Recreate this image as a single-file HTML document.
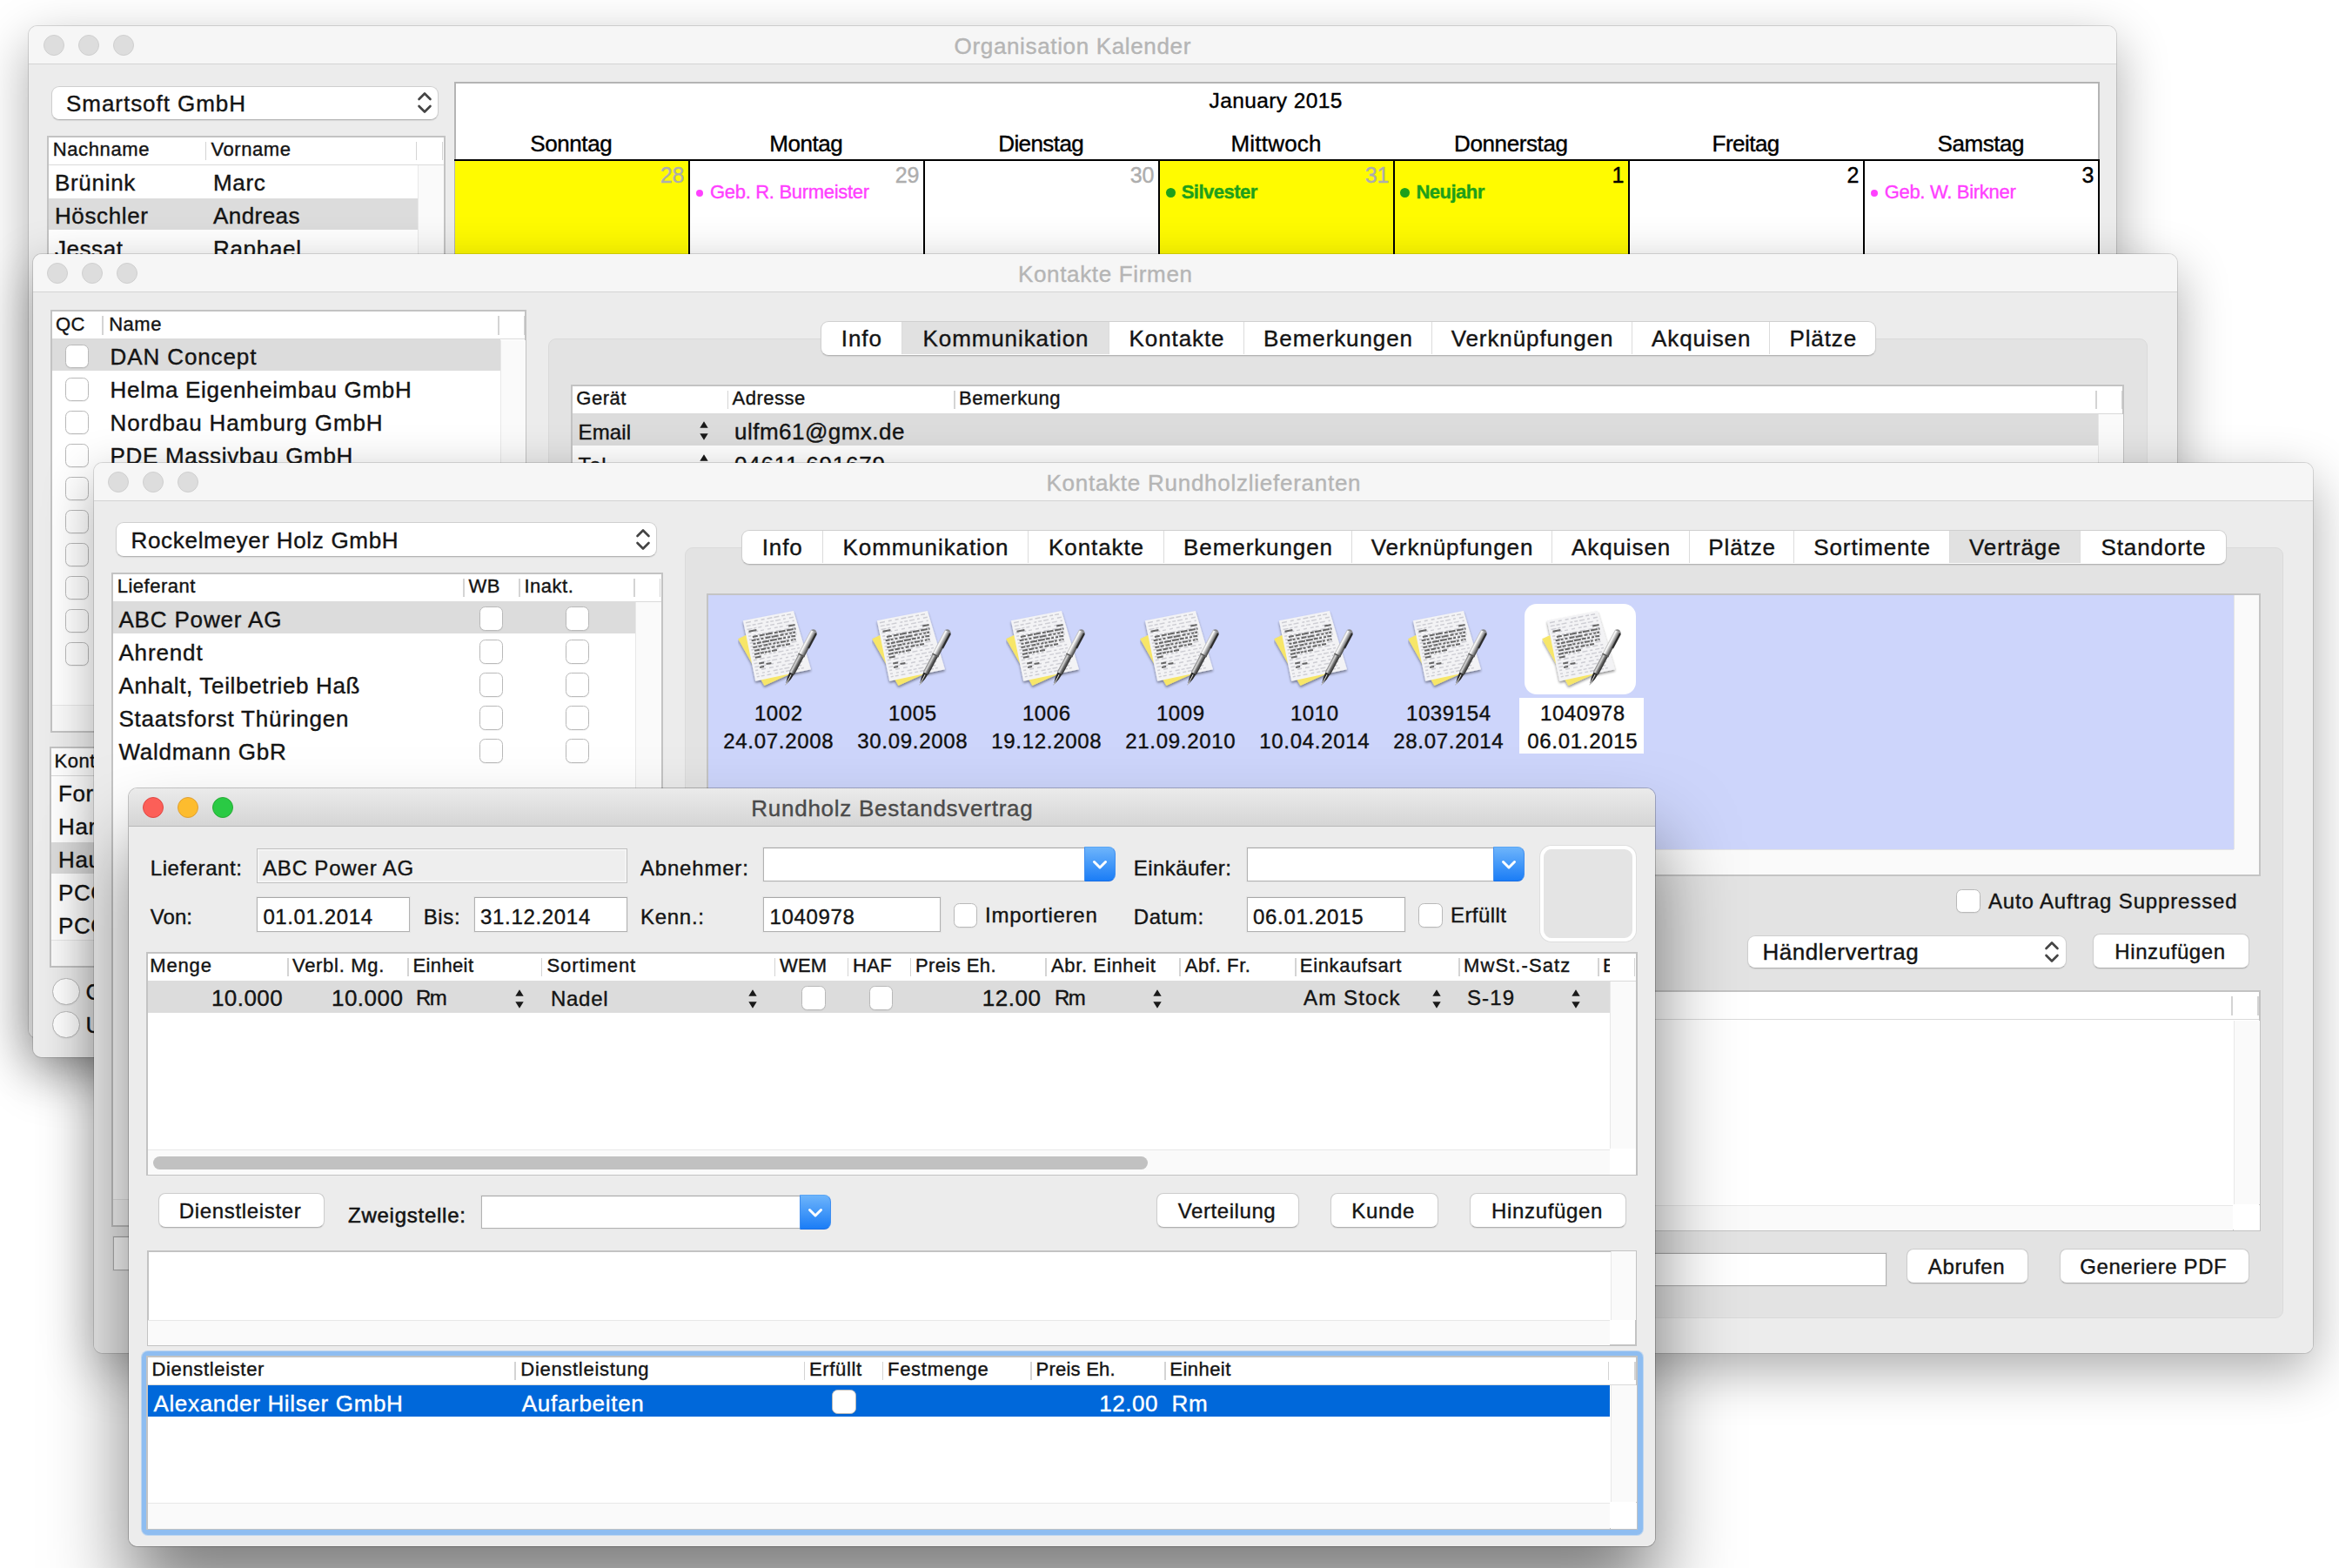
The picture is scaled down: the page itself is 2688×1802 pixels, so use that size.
<!DOCTYPE html>
<html><head><meta charset="utf-8"><title>Screenshot</title>
<style>
html,body{margin:0;padding:0}
body{width:2688px;height:1802px;overflow:hidden;background:#fff;font-family:"Liberation Sans",sans-serif;font-size:26px;letter-spacing:0.6px;color:#141414;position:relative}
.a{position:absolute;box-sizing:border-box}
.t{white-space:nowrap;-webkit-text-stroke:0.38px currentColor}
.win{position:absolute;border-radius:10px;box-shadow:0 0 0 1px rgba(0,0,0,0.13),0 20px 60px rgba(0,0,0,0.33)}
.win.act{box-shadow:0 0 0 1px rgba(0,0,0,0.22),0 60px 90px rgba(0,0,0,0.5)}
.wc{position:absolute;left:0;top:0;right:0;bottom:0;border-radius:10px;overflow:hidden;background:#ececec}
.tb{position:absolute;left:0;top:0;right:0;height:44px;box-sizing:border-box;background:#f6f6f6;border-bottom:1px solid #d4d4d4}
.act .tb{background:linear-gradient(#ebebeb,#d5d5d5);border-bottom:1px solid #b8b8b8}
.pop{background:#fff;border-radius:9px;border:1px solid #cfcfcf;border-bottom-color:#b4b4b4;box-shadow:0 1px 1px rgba(0,0,0,0.08)}
.btn{background:#fff;border-radius:8px;border:1px solid #cdcdcd;border-bottom-color:#b0b0b0;box-shadow:0 1px 1px rgba(0,0,0,0.08)}
.cb{background:#fff;border-radius:6.5px;border:1px solid #b9b9b9;box-shadow:0 1px 1px rgba(0,0,0,0.05)}
.rb{background:#fff;border-radius:50%;border:1px solid #b9b9b9;box-shadow:0 1px 1px rgba(0,0,0,0.05)}
.fld{background:#fff;border:1px solid #b2b2b2;border-top-color:#a8a8a8;box-shadow:0 0 0 1px rgba(0,0,0,0.03)}
.fld.dis{background:#eeeeee;border:1px solid #c0c0c0;box-shadow:inset 0 0 0 1.5px #f7f7f7}
.cbb{border-radius:0 8px 8px 0;background:linear-gradient(#6db4fb,#1b7df6);border:1px solid #3f8ef0;border-top-color:#5aa6f5;border-bottom-color:#1a6fe6}
.tbl{background:#fff;border:2px solid #c3c3c3}
.th{background:#fff;border-bottom:1px solid #dadada}
.vs{background:#fafafa;border-left:1px solid #e8e8e8}
.hs{background:#fafafa;border-top:1px solid #e8e8e8}
.seg{background:#fff;border-radius:9px;border:1px solid #cfcfcf;border-bottom-color:#b4b4b4;box-shadow:0 1px 1px rgba(0,0,0,0.08)}
.tabbox{background:#e3e3e3;border-radius:9px;border:1px solid #dadada}
.sel{background:#dcdcdc}
</style></head><body>
<svg width="0" height="0" style="position:absolute"><defs>
<linearGradient id="pen" x1="0" y1="0" x2="1" y2="0"><stop offset="0" stop-color="#b8b8b8"/><stop offset="0.22" stop-color="#ffffff"/><stop offset="0.55" stop-color="#a8a8a8"/><stop offset="1" stop-color="#3a3a3a"/></linearGradient>
<linearGradient id="pen2" x1="0" y1="0" x2="1" y2="0"><stop offset="0" stop-color="#7a7a7a"/><stop offset="0.28" stop-color="#d8d8d8"/><stop offset="0.6" stop-color="#6a6a6a"/><stop offset="1" stop-color="#2a2a2a"/></linearGradient>
<filter id="ds" x="-20%" y="-20%" width="140%" height="150%"><feGaussianBlur in="SourceAlpha" stdDeviation="1.6"/><feOffset dy="2"/><feComponentTransfer><feFuncA type="linear" slope="0.45"/></feComponentTransfer><feMerge><feMergeNode/><feMergeNode in="SourceGraphic"/></feMerge></filter>
<symbol id="doc" viewBox="0 0 92 92">
<g filter="url(#ds)">
<path d="M0.2 33.3 L43 13 L77 66 L30.4 87 Z" fill="#f7e668"/>
<path d="M5.9 12.2 L63.9 1.1 L84 68.3 L20.2 81.7 Z" fill="#f3f3f5"/>
</g>
<path d="M9.0 14.7L14.9 13.5M18.8 12.8L22.7 12.0M26.6 11.3L30.6 10.5M33.5 10.0L39.4 8.8M41.4 8.5L47.3 7.3M50.2 6.8L54.1 6.0M56.1 5.6L61.0 4.7M9.8 18.6L14.7 17.6M16.6 17.3L20.6 16.5M22.5 16.1L28.4 15.0M32.4 14.3L35.3 13.7M37.3 13.3L41.2 12.6M43.2 12.2L49.0 11.1M52.0 10.5L54.9 9.9M58.9 9.2L63.8 8.2M10.6 22.5L16.5 21.4M18.4 21.0L21.4 20.4M23.3 20.1L27.3 19.3M31.2 18.6L35.1 17.8M37.1 17.4L42.0 16.5M44.9 15.9L50.8 14.8M52.8 14.4L58.7 13.3M62.6 12.5L64.6 12.2M11.4 26.4L15.3 25.7M19.2 24.9L23.2 24.2M26.1 23.6L30.0 22.9M34.0 22.1L37.9 21.3M41.8 20.6L45.7 19.8M47.7 19.5L51.6 18.7M55.6 18.0L61.5 16.8M12.2 30.3L15.1 29.8M18.1 29.2L21.0 28.6M23.0 28.3L25.9 27.7M27.9 27.3L32.8 26.4M34.8 26.0L40.7 24.9M43.6 24.3L49.5 23.2M53.4 22.4L59.3 21.3M62.3 20.8L66.2 20.0M13.0 34.3L15.9 33.7M17.9 33.3L21.8 32.6M24.8 32.0L27.7 31.4M30.7 30.9L34.6 30.1M36.6 29.7L39.5 29.2M41.5 28.8L46.4 27.9M49.3 27.3L55.2 26.2M57.2 25.8L60.1 25.2M62.1 24.9L66.0 24.1M13.8 38.2L18.7 37.2M22.6 36.5L26.6 35.7M28.5 35.4L33.4 34.4M35.4 34.0L41.3 32.9M44.2 32.3L48.2 31.6M52.1 30.8L55.0 30.3M57.0 29.9L62.9 28.8M65.8 28.2L67.8 27.8M14.6 42.1L17.5 41.5M21.5 40.8L24.4 40.2M27.4 39.7L30.3 39.1M34.2 38.3L39.2 37.4M42.1 36.8L46.0 36.1M48.0 35.7L50.9 35.1M53.9 34.6L58.8 33.6M62.7 32.9L65.7 32.3M15.4 46.0L19.3 45.3M22.3 44.7L27.2 43.8M29.2 43.4L35.0 42.3M37.0 41.9L42.9 40.7M44.9 40.4L50.8 39.2M54.7 38.5L57.6 37.9M61.6 37.2L67.5 36.0M16.2 49.9L19.2 49.4M23.1 48.6L26.0 48.1M28.0 47.7L30.9 47.1M34.9 46.4L37.8 45.8M40.8 45.2L46.7 44.1M50.6 43.4L55.5 42.4M58.4 41.8L64.3 40.7M67.3 40.2L70.2 39.6M17.0 53.8L20.0 53.3M23.9 52.5L26.8 52.0M29.8 51.4L32.7 50.8M35.7 50.3L38.6 49.7M40.6 49.3L43.5 48.8M46.5 48.2L52.4 47.1M55.3 46.5L58.3 46.0M61.2 45.4L66.1 44.4M68.1 44.1L71.0 43.5M17.8 57.8L21.8 57.0M24.7 56.5L30.6 55.3M33.5 54.8L37.5 54.0M40.4 53.4L46.3 52.3M50.2 51.6L55.1 50.6M57.1 50.2L63.0 49.1M65.0 48.7L68.9 48.0M18.6 61.7L22.6 60.9M26.5 60.2L31.4 59.2M33.4 58.9L37.3 58.1M39.3 57.7L45.1 56.6M48.1 56.0L51.0 55.5M55.0 54.7L57.9 54.2M60.9 53.6L64.8 52.8M66.7 52.5L72.6 51.3M19.4 65.6L24.3 64.7M26.3 64.3L32.2 63.2M35.1 62.6L41.0 61.5M45.0 60.7L49.9 59.8M53.8 59.0L59.7 57.9M62.6 57.3L65.6 56.8M67.6 56.4L72.5 55.5M20.2 69.5L23.2 69.0M27.1 68.2L32.0 67.3M36.0 66.5L40.9 65.6M43.8 65.0L46.8 64.4M50.7 63.7L54.6 62.9M57.6 62.4L63.5 61.2M65.4 60.9L68.4 60.3M71.3 59.7L74.3 59.2M21.0 73.4L24.0 72.9M27.9 72.1L30.9 71.6M33.8 71.0L36.8 70.4M40.7 69.7L45.6 68.7M47.6 68.4L51.5 67.6M53.5 67.2L59.3 66.1M62.3 65.5L66.2 64.8M70.1 64.0L73.1 63.5M21.8 76.9L24.7 76.3M26.7 75.9L30.6 75.2M33.5 74.6L38.4 73.7M42.4 72.9L46.3 72.2M49.3 71.6L53.2 70.9M55.1 70.5L61.0 69.3M65.0 68.6L70.9 67.5M72.8 67.1L75.8 66.5" stroke="#cdcdd3" stroke-width="1.4" fill="none"/>
<path d="M12.5 24.7L21.4 23.0M58.2 18.5L65.6 17.1M16.9 31.0L22.8 29.8M24.8 29.5L30.7 28.3M32.0 28.1L39.9 26.6M41.8 26.2L45.8 25.4M46.8 25.2L54.6 23.7M56.0 23.5L63.8 22.0M64.8 21.8L66.5 21.5M15.7 35.3L20.7 34.3M21.6 34.1L24.6 33.6M26.5 33.2L29.5 32.6M31.5 32.2L37.4 31.1M38.7 30.9L46.6 29.4M48.5 29.0L52.5 28.2M54.4 27.9L57.4 27.3M59.3 26.9L62.3 26.3M63.3 26.2L66.2 25.6M67.2 25.4L67.3 25.4M17.5 39.0L20.5 38.4M21.9 38.2L26.8 37.2M28.1 37.0L36.0 35.5M37.0 35.3L44.8 33.8M45.8 33.6L50.7 32.6M52.1 32.4L55.0 31.8M57.0 31.4L60.0 30.9M61.3 30.6L66.2 29.7M67.6 29.4L67.6 29.4M17.4 43.1L22.3 42.2M23.6 41.9L27.6 41.1M29.5 40.8L34.4 39.8M35.4 39.6L38.4 39.1M40.3 38.7L43.3 38.1M44.7 37.9L47.6 37.3M49.0 37.0L54.9 35.9M55.9 35.7L58.8 35.2M60.8 34.8L63.7 34.2M64.7 34.0L66.5 33.7M19.1 46.8L25.0 45.7M26.4 45.4L32.3 44.3M33.7 44.0L36.6 43.5M38.6 43.1L42.5 42.3M44.5 42.0L49.4 41.0M50.8 40.8L53.7 40.2M55.1 39.9L60.0 39.0M19.0 50.9L24.9 49.8M25.8 49.6L29.8 48.9M30.8 48.7L33.7 48.1M34.7 47.9L37.6 47.4M39.0 47.1L44.9 46.0M19.8 54.8L26.7 53.5M24.2 61.6L30.1 60.5M25.1 66.0L30.1 65.1M32.5 62.1L38.4 61.0" stroke="#444" stroke-width="2" fill="none" opacity="0.8"/>
<g transform="translate(54.6 86.6) rotate(27.9)">
<path d="M0 0 L-2.2 -9 L-2.8 -16 L2.8 -16 L2.2 -9 Z" fill="#262626"/>
<path d="M0 -1 L0 -14" stroke="#e8e8e8" stroke-width="0.9"/>
<rect x="-3.4" y="-39" width="6.8" height="23.5" fill="url(#pen2)"/>
<rect x="-3.9" y="-70" width="7.8" height="31.5" fill="url(#pen)"/>
<path d="M-3.9 -70 Q0 -74.5 3.9 -70 Z" fill="#8a8a8a"/>
<rect x="2.4" y="-69" width="2.2" height="19" fill="#262626" opacity="0.9"/>
<rect x="-3.9" y="-40" width="7.8" height="1.6" fill="#555"/>
</g>
</symbol>
</defs></svg>

<div class="win" style="left:33px;top:30px;width:2399px;height:1163px;"><div class="wc">
<div class="tb"></div>
<div class="a t" style="top:8.3px;font-size:26px;line-height:31px;left:699.8px;width:1000px;text-align:center;color:#b5b5b5;letter-spacing:0.65px;">Organisation Kalender</div>
<div class="a " style="left:17.0px;top:10.0px;width:24.0px;height:24.0px;border-radius:50%;background:#dddddd;border:1px solid #cfcfcf;"></div>
<div class="a " style="left:57.0px;top:10.0px;width:24.0px;height:24.0px;border-radius:50%;background:#dddddd;border:1px solid #cfcfcf;"></div>
<div class="a " style="left:97.0px;top:10.0px;width:24.0px;height:24.0px;border-radius:50%;background:#dddddd;border:1px solid #cfcfcf;"></div>
<div class="a pop" style="left:26.3px;top:68.5px;width:445.0px;height:39.3px;"></div>
<div class="a t" style="top:74.1px;font-size:26px;line-height:31px;left:43.0px;letter-spacing:0.96px;">Smartsoft GmbH</div>
<svg class="a" style="left:444.8px;top:72.2px" width="20" height="32" viewBox="0 0 20 32"><path d="M3.5 12 L10 5.5 L16.5 12 M3.5 20 L10 26.5 L16.5 20" fill="none" stroke="#444" stroke-width="2.6" stroke-linecap="round" stroke-linejoin="round"/></svg>
<div class="a tbl" style="left:21.3px;top:125.8px;width:457.4px;height:944.9px;"></div>
<div class="a th" style="left:23.3px;top:127.8px;width:453.4px;height:31.9px;"></div>
<div class="a " style="left:202.8px;top:132.5px;width:1.5px;height:21.7px;background:#d4d4d4;"></div>
<div class="a " style="left:444.9px;top:132.5px;width:1.5px;height:21.7px;background:#d4d4d4;"></div>
<div class="a " style="left:474.9px;top:132.5px;width:1.5px;height:21.7px;background:#d4d4d4;"></div>
<div class="a t" style="top:129.1px;font-size:22px;line-height:26px;left:27.8px;letter-spacing:0.6px;">Nachname</div>
<div class="a t" style="top:129.1px;font-size:22px;line-height:26px;left:209.4px;letter-spacing:0.59px;">Vorname</div>
<div class="a vs" style="left:447.0px;top:160.2px;width:30.0px;height:908.8px;"></div>
<div class="a t" style="top:165.4px;font-size:26px;line-height:31px;left:29.9px;letter-spacing:0.71px;">Brünink</div>
<div class="a t" style="top:165.4px;font-size:26px;line-height:31px;left:212.0px;letter-spacing:0.68px;">Marc</div>
<div class="a sel" style="left:23.0px;top:198.0px;width:424.0px;height:36.3px;"></div>
<div class="a t" style="top:203.4px;font-size:26px;line-height:31px;left:29.9px;letter-spacing:0.63px;">Höschler</div>
<div class="a t" style="top:203.4px;font-size:26px;line-height:31px;left:212.0px;letter-spacing:0.44px;">Andreas</div>
<div class="a t" style="top:241.4px;font-size:26px;line-height:31px;left:29.9px;letter-spacing:0.57px;">Jessat</div>
<div class="a t" style="top:241.4px;font-size:26px;line-height:31px;left:212.0px;letter-spacing:0.69px;">Raphael</div>
<div class="a t" style="top:279.4px;font-size:26px;line-height:31px;left:29.9px;letter-spacing:0.6px;">Kluge</div>
<div class="a t" style="top:279.4px;font-size:26px;line-height:31px;left:212.0px;letter-spacing:0.6px;">Stefan</div>
<div class="a " style="left:489.0px;top:64.0px;width:1890.5px;height:1006.0px;background:#fff;border:2px solid #b4b4b4;border-bottom:none;"></div>
<div class="a t" style="top:71.0px;font-size:24.5px;line-height:29px;left:933.2px;width:1000px;text-align:center;color:#000;letter-spacing:0.41px;">January 2015</div>
<div class="a t" style="top:119.7px;font-size:26px;line-height:31px;left:123.3px;width:1000px;text-align:center;color:#000;letter-spacing:-0.43px;">Sonntag</div>
<div class="a t" style="top:119.7px;font-size:26px;line-height:31px;left:393.3px;width:1000px;text-align:center;color:#000;letter-spacing:-0.42px;">Montag</div>
<div class="a t" style="top:119.7px;font-size:26px;line-height:31px;left:663.2px;width:1000px;text-align:center;color:#000;letter-spacing:-0.59px;">Dienstag</div>
<div class="a t" style="top:119.7px;font-size:26px;line-height:31px;left:933.6px;width:1000px;text-align:center;color:#000;letter-spacing:0.23px;">Mittwoch</div>
<div class="a t" style="top:119.7px;font-size:26px;line-height:31px;left:1203.3px;width:1000px;text-align:center;color:#000;letter-spacing:-0.4px;">Donnerstag</div>
<div class="a t" style="top:119.7px;font-size:26px;line-height:31px;left:1473.2px;width:1000px;text-align:center;color:#000;letter-spacing:-0.54px;">Freitag</div>
<div class="a t" style="top:119.7px;font-size:26px;line-height:31px;left:1743.3px;width:1000px;text-align:center;color:#000;letter-spacing:-0.45px;">Samstag</div>
<div class="a " style="left:490.0px;top:155.0px;width:268.0px;height:415.0px;background:#fffb00;"></div>
<div class="a " style="left:1300.0px;top:155.0px;width:268.0px;height:415.0px;background:#fffb00;"></div>
<div class="a " style="left:1570.0px;top:155.0px;width:268.0px;height:415.0px;background:#fffb00;"></div>
<div class="a " style="left:489.0px;top:153.2px;width:1890.5px;height:2.0px;background:#000;"></div>
<div class="a " style="left:758.0px;top:154.0px;width:2.0px;height:416.0px;background:#000;"></div>
<div class="a " style="left:1028.0px;top:154.0px;width:2.0px;height:416.0px;background:#000;"></div>
<div class="a " style="left:1298.0px;top:154.0px;width:2.0px;height:416.0px;background:#000;"></div>
<div class="a " style="left:1568.0px;top:154.0px;width:2.0px;height:416.0px;background:#000;"></div>
<div class="a " style="left:1838.0px;top:154.0px;width:2.0px;height:416.0px;background:#000;"></div>
<div class="a " style="left:2108.0px;top:154.0px;width:2.0px;height:416.0px;background:#000;"></div>
<div class="a " style="left:2378.0px;top:154.0px;width:1.5px;height:416.0px;background:#000;"></div>
<div class="a t" style="top:155.8px;font-size:25px;line-height:30px;right:1645.5px;color:#adadad;letter-spacing:0px;">28</div>
<div class="a t" style="top:155.8px;font-size:25px;line-height:30px;right:1375.5px;color:#adadad;letter-spacing:0px;">29</div>
<div class="a t" style="top:155.8px;font-size:25px;line-height:30px;right:1105.5px;color:#adadad;letter-spacing:0px;">30</div>
<div class="a t" style="top:155.8px;font-size:25px;line-height:30px;right:835.5px;color:#adadad;letter-spacing:0px;">31</div>
<div class="a t" style="top:155.8px;font-size:25px;line-height:30px;right:565.5px;color:#000;letter-spacing:0px;">1</div>
<div class="a t" style="top:155.8px;font-size:25px;line-height:30px;right:295.5px;color:#000;letter-spacing:0px;">2</div>
<div class="a t" style="top:155.8px;font-size:25px;line-height:30px;right:25.5px;color:#000;letter-spacing:0px;">3</div>
<div class="a " style="left:766.8px;top:187.7px;width:8.0px;height:8.0px;border-radius:50%;background:#ff40ff;"></div>
<div class="a t" style="top:178.4px;font-size:22px;line-height:26px;left:783.0px;color:#ff40ff;letter-spacing:-0.31px;">Geb. R. Burmeister</div>
<div class="a " style="left:1306.5px;top:186.2px;width:11.0px;height:11.0px;border-radius:50%;background:#1ea01a;"></div>
<div class="a t" style="top:178.4px;font-size:22px;line-height:26px;left:1324.7px;color:#1ea01a;font-weight:bold;letter-spacing:-0.5px;">Silvester</div>
<div class="a " style="left:1576.3px;top:186.2px;width:11.0px;height:11.0px;border-radius:50%;background:#1ea01a;"></div>
<div class="a t" style="top:178.4px;font-size:22px;line-height:26px;left:1594.5px;color:#1ea01a;font-weight:bold;letter-spacing:-0.52px;">Neujahr</div>
<div class="a " style="left:2116.5px;top:187.7px;width:8.0px;height:8.0px;border-radius:50%;background:#ff40ff;"></div>
<div class="a t" style="top:178.4px;font-size:22px;line-height:26px;left:2132.7px;color:#ff40ff;letter-spacing:-0.3px;">Geb. W. Birkner</div>
</div></div>
<div class="win" style="left:38px;top:292px;width:2464px;height:923px;"><div class="wc">
<div class="tb"></div>
<div class="a t" style="top:8.3px;font-size:26px;line-height:31px;left:732.3px;width:1000px;text-align:center;color:#b5b5b5;letter-spacing:0.66px;">Kontakte Firmen</div>
<div class="a " style="left:16.0px;top:10.0px;width:24.0px;height:24.0px;border-radius:50%;background:#dddddd;border:1px solid #cfcfcf;"></div>
<div class="a " style="left:56.0px;top:10.0px;width:24.0px;height:24.0px;border-radius:50%;background:#dddddd;border:1px solid #cfcfcf;"></div>
<div class="a " style="left:96.0px;top:10.0px;width:24.0px;height:24.0px;border-radius:50%;background:#dddddd;border:1px solid #cfcfcf;"></div>
<div class="a tbl" style="left:19.8px;top:64.3px;width:547.5px;height:485.4px;"></div>
<div class="a th" style="left:21.8px;top:66.3px;width:543.5px;height:31.9px;"></div>
<div class="a " style="left:79.0px;top:71.0px;width:1.5px;height:21.7px;background:#d4d4d4;"></div>
<div class="a " style="left:534.2px;top:71.0px;width:1.5px;height:21.7px;background:#d4d4d4;"></div>
<div class="a " style="left:563.5px;top:71.0px;width:1.5px;height:21.7px;background:#d4d4d4;"></div>
<div class="a t" style="top:67.6px;font-size:22px;line-height:26px;left:26.0px;letter-spacing:0.5px;">QC</div>
<div class="a t" style="top:67.6px;font-size:22px;line-height:26px;left:87.2px;letter-spacing:0.5px;">Name</div>
<div class="a vs" style="left:537.0px;top:98.7px;width:28.6px;height:419.3px;"></div>
<div class="a hs" style="left:21.5px;top:518.0px;width:515.5px;height:30.0px;"></div>
<div class="a " style="left:537.0px;top:518.0px;width:28.6px;height:30.0px;background:#fff;"></div>
<div class="a sel" style="left:21.5px;top:98.0px;width:515.5px;height:36.0px;"></div>
<div class="a cb " style="left:37.2px;top:103.5px;width:27.2px;height:27.1px;"></div>
<div class="a t" style="top:103.4px;font-size:26px;line-height:31px;left:88.6px;letter-spacing:0.88px;">DAN Concept</div>
<div class="a cb " style="left:37.2px;top:141.5px;width:27.2px;height:27.1px;"></div>
<div class="a t" style="top:141.4px;font-size:26px;line-height:31px;left:88.6px;letter-spacing:0.69px;">Helma Eigenheimbau GmbH</div>
<div class="a cb " style="left:37.2px;top:179.5px;width:27.2px;height:27.1px;"></div>
<div class="a t" style="top:179.4px;font-size:26px;line-height:31px;left:88.6px;letter-spacing:0.88px;">Nordbau Hamburg GmbH</div>
<div class="a cb " style="left:37.2px;top:217.5px;width:27.2px;height:27.1px;"></div>
<div class="a t" style="top:217.4px;font-size:26px;line-height:31px;left:88.6px;letter-spacing:0.67px;">PDE Massivbau GmbH</div>
<div class="a cb " style="left:37.2px;top:255.5px;width:27.2px;height:27.1px;"></div>
<div class="a t" style="top:255.4px;font-size:26px;line-height:31px;left:88.6px;letter-spacing:0.6px;">Ranft Bau GmbH</div>
<div class="a cb " style="left:37.2px;top:293.5px;width:27.2px;height:27.1px;"></div>
<div class="a t" style="top:293.4px;font-size:26px;line-height:31px;left:88.6px;letter-spacing:0.6px;">Richter Hausbau</div>
<div class="a cb " style="left:37.2px;top:331.5px;width:27.2px;height:27.1px;"></div>
<div class="a t" style="top:331.4px;font-size:26px;line-height:31px;left:88.6px;letter-spacing:0.6px;">Schmidt &amp; Söhne</div>
<div class="a cb " style="left:37.2px;top:369.5px;width:27.2px;height:27.1px;"></div>
<div class="a t" style="top:369.4px;font-size:26px;line-height:31px;left:88.6px;letter-spacing:0.6px;">Town &amp; Country</div>
<div class="a cb " style="left:37.2px;top:407.5px;width:27.2px;height:27.1px;"></div>
<div class="a t" style="top:407.4px;font-size:26px;line-height:31px;left:88.6px;letter-spacing:0.6px;">Viebrock Haus</div>
<div class="a cb " style="left:37.2px;top:445.5px;width:27.2px;height:27.1px;"></div>
<div class="a t" style="top:445.4px;font-size:26px;line-height:31px;left:88.6px;letter-spacing:0.6px;">Weber Massivhaus</div>
<div class="a tbl" style="left:19.3px;top:566.3px;width:548.0px;height:253.4px;"></div>
<div class="a th" style="left:21.3px;top:568.3px;width:544.0px;height:31.9px;"></div>
<div class="a " style="left:534.2px;top:573.0px;width:1.5px;height:21.7px;background:#d4d4d4;"></div>
<div class="a " style="left:563.5px;top:573.0px;width:1.5px;height:21.7px;background:#d4d4d4;"></div>
<div class="a t" style="top:569.6px;font-size:22px;line-height:26px;left:24.5px;letter-spacing:0.5px;">Kontakt</div>
<div class="a vs" style="left:537.0px;top:600.7px;width:28.6px;height:187.3px;"></div>
<div class="a hs" style="left:21.0px;top:788.0px;width:516.0px;height:30.0px;"></div>
<div class="a " style="left:537.0px;top:788.0px;width:28.6px;height:30.0px;background:#fff;"></div>
<div class="a t" style="top:605.4px;font-size:26px;line-height:31px;left:29.0px;letter-spacing:0.6px;">Forstmann</div>
<div class="a t" style="top:643.4px;font-size:26px;line-height:31px;left:29.0px;letter-spacing:0.6px;">Hartmann</div>
<div class="a sel" style="left:21.0px;top:676.0px;width:516.0px;height:36.0px;"></div>
<div class="a t" style="top:681.4px;font-size:26px;line-height:31px;left:29.0px;letter-spacing:0.6px;">Hauser</div>
<div class="a t" style="top:719.4px;font-size:26px;line-height:31px;left:29.0px;letter-spacing:0.6px;">PCO AG</div>
<div class="a t" style="top:757.4px;font-size:26px;line-height:31px;left:29.0px;letter-spacing:0.6px;">PCO GmbH</div>
<div class="a rb" style="left:22.2px;top:831.8px;width:31.6px;height:31.6px;"></div>
<div class="a rb" style="left:22.2px;top:869.9px;width:31.6px;height:31.6px;"></div>
<div class="a t" style="top:832.5px;font-size:26px;line-height:31px;left:60.6px;letter-spacing:0.6px;">Computer</div>
<div class="a t" style="top:870.5px;font-size:26px;line-height:31px;left:60.6px;letter-spacing:0.6px;">Unternehmen</div>
<div class="a tabbox" style="left:592.0px;top:96.6px;width:1837.5px;height:801.4px;"></div>
<div class="a seg" style="left:905.0px;top:77.2px;width:1213.0px;height:39.8px;"></div>
<div class="a t" style="top:82.1px;font-size:26px;line-height:31px;left:452.3px;width:1000px;text-align:center;letter-spacing:0.9px;">Info</div>
<div class="a " style="left:999.2px;top:78.2px;width:237.3px;height:37.3px;background:#e1e1e1;"></div>
<div class="a t" style="top:82.1px;font-size:26px;line-height:31px;left:618.0px;width:1000px;text-align:center;letter-spacing:0.9px;">Kommunikation</div>
<div class="a t" style="top:82.1px;font-size:26px;line-height:31px;left:814.5px;width:1000px;text-align:center;letter-spacing:0.9px;">Kontakte</div>
<div class="a t" style="top:82.1px;font-size:26px;line-height:31px;left:1000.0px;width:1000px;text-align:center;letter-spacing:0.9px;">Bemerkungen</div>
<div class="a t" style="top:82.1px;font-size:26px;line-height:31px;left:1223.0px;width:1000px;text-align:center;letter-spacing:0.9px;">Verknüpfungen</div>
<div class="a t" style="top:82.1px;font-size:26px;line-height:31px;left:1417.2px;width:1000px;text-align:center;letter-spacing:0.9px;">Akquisen</div>
<div class="a t" style="top:82.1px;font-size:26px;line-height:31px;left:1557.3px;width:1000px;text-align:center;letter-spacing:0.9px;">Plätze</div>
<div class="a " style="left:998.2px;top:78.2px;width:1.0px;height:37.3px;background:#dcdcdc;"></div>
<div class="a " style="left:1236.0px;top:78.2px;width:1.0px;height:37.3px;background:#dcdcdc;"></div>
<div class="a " style="left:1391.1px;top:78.2px;width:1.0px;height:37.3px;background:#dcdcdc;"></div>
<div class="a " style="left:1606.9px;top:78.2px;width:1.0px;height:37.3px;background:#dcdcdc;"></div>
<div class="a " style="left:1837.3px;top:78.2px;width:1.0px;height:37.3px;background:#dcdcdc;"></div>
<div class="a " style="left:1995.3px;top:78.2px;width:1.0px;height:37.3px;background:#dcdcdc;"></div>
<div class="a tbl" style="left:618.3px;top:149.8px;width:1785.1px;height:658.9px;"></div>
<div class="a th" style="left:620.3px;top:151.8px;width:1781.1px;height:31.9px;"></div>
<div class="a " style="left:797.8px;top:156.5px;width:1.5px;height:21.7px;background:#d4d4d4;"></div>
<div class="a " style="left:1058.2px;top:156.5px;width:1.5px;height:21.7px;background:#d4d4d4;"></div>
<div class="a " style="left:2370.2px;top:156.5px;width:1.5px;height:21.7px;background:#d4d4d4;"></div>
<div class="a " style="left:2399.8px;top:156.5px;width:1.5px;height:21.7px;background:#d4d4d4;"></div>
<div class="a t" style="top:153.1px;font-size:22px;line-height:26px;left:624.3px;letter-spacing:0.5px;">Gerät</div>
<div class="a t" style="top:153.1px;font-size:22px;line-height:26px;left:803.5px;letter-spacing:0.5px;">Adresse</div>
<div class="a t" style="top:153.1px;font-size:22px;line-height:26px;left:1064.0px;letter-spacing:0.5px;">Bemerkung</div>
<div class="a vs" style="left:2373.0px;top:184.2px;width:28.7px;height:622.8px;"></div>
<div class="a sel" style="left:620.0px;top:183.7px;width:1753.0px;height:36.3px;"></div>
<div class="a t" style="top:189.5px;font-size:24px;line-height:29px;left:626.6px;letter-spacing:0.1px;">Email</div>
<svg class="a" style="left:765.8px;top:192.0px" width="10" height="22" viewBox="0 0 10 22"><path d="M5 0.2 L9.7 7.8 L0.3 7.8 Z M5 21.8 L9.7 14.2 L0.3 14.2 Z" fill="#1a1a1a"/></svg>
<div class="a t" style="top:189.3px;font-size:26px;line-height:31px;left:806.0px;letter-spacing:0.48px;">ulfm61@gmx.de</div>
<div class="a t" style="top:227.5px;font-size:24px;line-height:29px;left:626.6px;letter-spacing:0.6px;">Tel.</div>
<svg class="a" style="left:765.8px;top:230.0px" width="10" height="22" viewBox="0 0 10 22"><path d="M5 0.2 L9.7 7.8 L0.3 7.8 Z M5 21.8 L9.7 14.2 L0.3 14.2 Z" fill="#1a1a1a"/></svg>
<div class="a t" style="top:227.3px;font-size:26px;line-height:31px;left:806.0px;letter-spacing:0.79px;">04611 691679</div>
</div></div>
<div class="win" style="left:108px;top:532px;width:2550px;height:1023px;"><div class="wc">
<div class="tb"></div>
<div class="a t" style="top:8.3px;font-size:26px;line-height:31px;left:775.4px;width:1000px;text-align:center;color:#b5b5b5;letter-spacing:0.74px;">Kontakte Rundholzlieferanten</div>
<div class="a " style="left:16.0px;top:10.0px;width:24.0px;height:24.0px;border-radius:50%;background:#dddddd;border:1px solid #cfcfcf;"></div>
<div class="a " style="left:56.0px;top:10.0px;width:24.0px;height:24.0px;border-radius:50%;background:#dddddd;border:1px solid #cfcfcf;"></div>
<div class="a " style="left:96.0px;top:10.0px;width:24.0px;height:24.0px;border-radius:50%;background:#dddddd;border:1px solid #cfcfcf;"></div>
<div class="a pop" style="left:25.3px;top:68.2px;width:621.7px;height:39.5px;"></div>
<div class="a t" style="top:73.5px;font-size:26px;line-height:31px;left:42.5px;letter-spacing:0.69px;">Rockelmeyer Holz GmbH</div>
<svg class="a" style="left:620.5px;top:72.0px" width="20" height="32" viewBox="0 0 20 32"><path d="M3.5 12 L10 5.5 L16.5 12 M3.5 20 L10 26.5 L16.5 20" fill="none" stroke="#444" stroke-width="2.6" stroke-linecap="round" stroke-linejoin="round"/></svg>
<div class="a tbl" style="left:20.0px;top:125.9px;width:633.7px;height:751.8px;"></div>
<div class="a th" style="left:22.0px;top:127.9px;width:629.7px;height:31.9px;"></div>
<div class="a " style="left:424.0px;top:132.6px;width:1.5px;height:21.7px;background:#d4d4d4;"></div>
<div class="a " style="left:488.1px;top:132.6px;width:1.5px;height:21.7px;background:#d4d4d4;"></div>
<div class="a " style="left:620.1px;top:132.6px;width:1.5px;height:21.7px;background:#d4d4d4;"></div>
<div class="a " style="left:649.8px;top:132.6px;width:1.5px;height:21.7px;background:#d4d4d4;"></div>
<div class="a t" style="top:129.2px;font-size:22px;line-height:26px;left:26.7px;letter-spacing:0.5px;">Lieferant</div>
<div class="a t" style="top:129.2px;font-size:22px;line-height:26px;left:430.5px;letter-spacing:0.5px;">WB</div>
<div class="a t" style="top:129.2px;font-size:22px;line-height:26px;left:494.5px;letter-spacing:0.5px;">Inakt.</div>
<div class="a vs" style="left:622.0px;top:160.3px;width:30.0px;height:685.7px;"></div>
<div class="a hs" style="left:21.7px;top:846.0px;width:600.3px;height:30.0px;"></div>
<div class="a " style="left:622.0px;top:846.0px;width:30.0px;height:30.0px;background:#fff;"></div>
<div class="a sel" style="left:21.7px;top:159.0px;width:600.3px;height:36.5px;"></div>
<div class="a t" style="top:164.5px;font-size:26px;line-height:31px;left:28.4px;letter-spacing:0.84px;">ABC Power AG</div>
<div class="a cb " style="left:443.2px;top:165.3px;width:27.3px;height:27.3px;"></div>
<div class="a cb " style="left:541.5px;top:165.3px;width:27.3px;height:27.3px;"></div>
<div class="a t" style="top:202.5px;font-size:26px;line-height:31px;left:28.4px;letter-spacing:0.86px;">Ahrendt</div>
<div class="a cb " style="left:443.2px;top:203.3px;width:27.3px;height:27.3px;"></div>
<div class="a cb " style="left:541.5px;top:203.3px;width:27.3px;height:27.3px;"></div>
<div class="a t" style="top:240.5px;font-size:26px;line-height:31px;left:28.4px;letter-spacing:0.66px;">Anhalt, Teilbetrieb Haß</div>
<div class="a cb " style="left:443.2px;top:241.3px;width:27.3px;height:27.3px;"></div>
<div class="a cb " style="left:541.5px;top:241.3px;width:27.3px;height:27.3px;"></div>
<div class="a t" style="top:278.5px;font-size:26px;line-height:31px;left:28.4px;letter-spacing:0.8px;">Staatsforst Thüringen</div>
<div class="a cb " style="left:443.2px;top:279.3px;width:27.3px;height:27.3px;"></div>
<div class="a cb " style="left:541.5px;top:279.3px;width:27.3px;height:27.3px;"></div>
<div class="a t" style="top:316.5px;font-size:26px;line-height:31px;left:28.4px;letter-spacing:0.76px;">Waldmann GbR</div>
<div class="a cb " style="left:443.2px;top:317.3px;width:27.3px;height:27.3px;"></div>
<div class="a cb " style="left:541.5px;top:317.3px;width:27.3px;height:27.3px;"></div>
<div class="a fld" style="left:21.5px;top:889.4px;width:630.5px;height:38.9px;"></div>
<div class="a tabbox" style="left:678.5px;top:97.0px;width:1837.0px;height:886.0px;"></div>
<div class="a seg" style="left:744.0px;top:77.3px;width:1707.0px;height:39.3px;"></div>
<div class="a t" style="top:81.7px;font-size:26px;line-height:31px;left:291.2px;width:1000px;text-align:center;letter-spacing:0.9px;">Info</div>
<div class="a t" style="top:81.7px;font-size:26px;line-height:31px;left:456.0px;width:1000px;text-align:center;letter-spacing:0.9px;">Kommunikation</div>
<div class="a t" style="top:81.7px;font-size:26px;line-height:31px;left:652.0px;width:1000px;text-align:center;letter-spacing:0.9px;">Kontakte</div>
<div class="a t" style="top:81.7px;font-size:26px;line-height:31px;left:838.0px;width:1000px;text-align:center;letter-spacing:0.9px;">Bemerkungen</div>
<div class="a t" style="top:81.7px;font-size:26px;line-height:31px;left:1061.0px;width:1000px;text-align:center;letter-spacing:0.9px;">Verknüpfungen</div>
<div class="a t" style="top:81.7px;font-size:26px;line-height:31px;left:1255.1px;width:1000px;text-align:center;letter-spacing:0.9px;">Akquisen</div>
<div class="a t" style="top:81.7px;font-size:26px;line-height:31px;left:1394.1px;width:1000px;text-align:center;letter-spacing:0.9px;">Plätze</div>
<div class="a t" style="top:81.7px;font-size:26px;line-height:31px;left:1543.6px;width:1000px;text-align:center;letter-spacing:0.9px;">Sortimente</div>
<div class="a " style="left:2133.1px;top:78.3px;width:148.9px;height:36.8px;background:#e1e1e1;"></div>
<div class="a t" style="top:81.7px;font-size:26px;line-height:31px;left:1707.8px;width:1000px;text-align:center;letter-spacing:0.9px;">Verträge</div>
<div class="a t" style="top:81.7px;font-size:26px;line-height:31px;left:1866.9px;width:1000px;text-align:center;letter-spacing:0.9px;">Standorte</div>
<div class="a " style="left:837.0px;top:78.3px;width:1.0px;height:36.8px;background:#dcdcdc;"></div>
<div class="a " style="left:1073.2px;top:78.3px;width:1.0px;height:36.8px;background:#dcdcdc;"></div>
<div class="a " style="left:1229.0px;top:78.3px;width:1.0px;height:36.8px;background:#dcdcdc;"></div>
<div class="a " style="left:1445.1px;top:78.3px;width:1.0px;height:36.8px;background:#dcdcdc;"></div>
<div class="a " style="left:1675.1px;top:78.3px;width:1.0px;height:36.8px;background:#dcdcdc;"></div>
<div class="a " style="left:1833.2px;top:78.3px;width:1.0px;height:36.8px;background:#dcdcdc;"></div>
<div class="a " style="left:1953.2px;top:78.3px;width:1.0px;height:36.8px;background:#dcdcdc;"></div>
<div class="a " style="left:2132.1px;top:78.3px;width:1.0px;height:36.8px;background:#dcdcdc;"></div>
<div class="a " style="left:2281.5px;top:78.3px;width:1.0px;height:36.8px;background:#dcdcdc;"></div>
<div class="a " style="left:704.0px;top:150.3px;width:1786.2px;height:324.7px;background:#fafafa;border:2px solid #c4c4c4;"></div>
<div class="a " style="left:706.0px;top:152.3px;width:1752.5px;height:291.7px;background:#cdd5fb;"></div>
<div class="a " style="left:2458.5px;top:152.3px;width:29.7px;height:291.7px;background:#fafafa;border-left:1px solid #e4e4e4;"></div>
<div class="a " style="left:706.0px;top:444.0px;width:1752.5px;height:29.0px;background:#fafafa;border-top:1px solid #e4e4e4;"></div>
<svg class="a" style="left:740.0px;top:169.0px" width="92" height="92"><use href="#doc"/></svg>
<div class="a t" style="top:272.9px;font-size:24px;line-height:29px;left:286.8px;width:1000px;text-align:center;color:#111;letter-spacing:0.6px;">1002</div>
<div class="a t" style="top:304.9px;font-size:24px;line-height:29px;left:286.8px;width:1000px;text-align:center;color:#111;letter-spacing:0.69px;">24.07.2008</div>
<svg class="a" style="left:894.0px;top:169.0px" width="92" height="92"><use href="#doc"/></svg>
<div class="a t" style="top:272.9px;font-size:24px;line-height:29px;left:440.8px;width:1000px;text-align:center;color:#111;letter-spacing:0.6px;">1005</div>
<div class="a t" style="top:304.9px;font-size:24px;line-height:29px;left:440.8px;width:1000px;text-align:center;color:#111;letter-spacing:0.69px;">30.09.2008</div>
<svg class="a" style="left:1048.0px;top:169.0px" width="92" height="92"><use href="#doc"/></svg>
<div class="a t" style="top:272.9px;font-size:24px;line-height:29px;left:594.8px;width:1000px;text-align:center;color:#111;letter-spacing:0.6px;">1006</div>
<div class="a t" style="top:304.9px;font-size:24px;line-height:29px;left:594.8px;width:1000px;text-align:center;color:#111;letter-spacing:0.69px;">19.12.2008</div>
<svg class="a" style="left:1202.0px;top:169.0px" width="92" height="92"><use href="#doc"/></svg>
<div class="a t" style="top:272.9px;font-size:24px;line-height:29px;left:748.8px;width:1000px;text-align:center;color:#111;letter-spacing:0.6px;">1009</div>
<div class="a t" style="top:304.9px;font-size:24px;line-height:29px;left:748.8px;width:1000px;text-align:center;color:#111;letter-spacing:0.69px;">21.09.2010</div>
<svg class="a" style="left:1356.0px;top:169.0px" width="92" height="92"><use href="#doc"/></svg>
<div class="a t" style="top:272.9px;font-size:24px;line-height:29px;left:902.8px;width:1000px;text-align:center;color:#111;letter-spacing:0.6px;">1010</div>
<div class="a t" style="top:304.9px;font-size:24px;line-height:29px;left:902.8px;width:1000px;text-align:center;color:#111;letter-spacing:0.69px;">10.04.2014</div>
<svg class="a" style="left:1510.0px;top:169.0px" width="92" height="92"><use href="#doc"/></svg>
<div class="a t" style="top:272.9px;font-size:24px;line-height:29px;left:1056.8px;width:1000px;text-align:center;color:#111;letter-spacing:0.6px;">1039154</div>
<div class="a t" style="top:304.9px;font-size:24px;line-height:29px;left:1056.8px;width:1000px;text-align:center;color:#111;letter-spacing:0.69px;">28.07.2014</div>
<div class="a " style="left:1644.0px;top:162.0px;width:128.0px;height:103.5px;background:#fff;border-radius:14px;"></div>
<div class="a " style="left:1638.0px;top:270.3px;width:142.6px;height:63.7px;background:#fff;"></div>
<svg class="a" style="left:1664.0px;top:169.0px" width="92" height="92"><use href="#doc"/></svg>
<div class="a t" style="top:272.9px;font-size:24px;line-height:29px;left:1210.8px;width:1000px;text-align:center;color:#111;letter-spacing:0.6px;">1040978</div>
<div class="a t" style="top:304.9px;font-size:24px;line-height:29px;left:1210.8px;width:1000px;text-align:center;color:#111;letter-spacing:0.69px;">06.01.2015</div>
<div class="a cb " style="left:2140.4px;top:490.3px;width:27.2px;height:27.1px;"></div>
<div class="a t" style="top:489.2px;font-size:24px;line-height:29px;left:2177.0px;letter-spacing:0.85px;">Auto Auftrag Suppressed</div>
<div class="a pop" style="left:1899.5px;top:542.6px;width:367.0px;height:38.4px;"></div>
<div class="a t" style="top:547.1px;font-size:26px;line-height:31px;left:1917.4px;letter-spacing:0.57px;">Händlervertrag</div>
<svg class="a" style="left:2240.0px;top:545.8px" width="20" height="32" viewBox="0 0 20 32"><path d="M3.5 12 L10 5.5 L16.5 12 M3.5 20 L10 26.5 L16.5 20" fill="none" stroke="#444" stroke-width="2.6" stroke-linecap="round" stroke-linejoin="round"/></svg>
<div class="a btn" style="left:2296.7px;top:540.9px;width:180.6px;height:39.8px;"></div>
<div class="a t" style="top:547.1px;font-size:24px;line-height:29px;left:1886.0px;width:1000px;text-align:center;letter-spacing:0.59px;">Hinzufügen</div>
<div class="a tbl" style="left:704.0px;top:606.3px;width:1786.2px;height:276.9px;"></div>
<div class="a th" style="left:706.0px;top:608.3px;width:1782.2px;height:31.9px;"></div>
<div class="a " style="left:2456.2px;top:613.0px;width:1.5px;height:21.7px;background:#d4d4d4;"></div>
<div class="a " style="left:2486.2px;top:613.0px;width:1.5px;height:21.7px;background:#d4d4d4;"></div>
<div class="a vs" style="left:2458.5px;top:640.7px;width:30.0px;height:211.8px;"></div>
<div class="a hs" style="left:705.7px;top:852.5px;width:1752.8px;height:29.0px;"></div>
<div class="a " style="left:2458.5px;top:852.5px;width:30.0px;height:29.0px;background:#fff;"></div>
<div class="a fld" style="left:704.7px;top:907.6px;width:1355.7px;height:38.8px;"></div>
<div class="a btn" style="left:2083.3px;top:902.8px;width:139.4px;height:40.2px;"></div>
<div class="a t" style="top:909.0px;font-size:24px;line-height:29px;left:1652.0px;width:1000px;text-align:center;letter-spacing:0.6px;">Abrufen</div>
<div class="a btn" style="left:2258.7px;top:902.8px;width:218.3px;height:40.2px;"></div>
<div class="a t" style="top:909.0px;font-size:24px;line-height:29px;left:1866.8px;width:1000px;text-align:center;letter-spacing:0.6px;">Generiere PDF</div>
</div></div>
<div class="win act" style="left:148px;top:906px;width:1754px;height:871px;"><div class="wc">
<div class="tb"></div>
<div class="a t" style="top:7.5px;font-size:26px;line-height:31px;left:377.4px;width:1000px;text-align:center;color:#4a4a4a;letter-spacing:0.74px;">Rundholz Bestandsvertrag</div>
<div class="a " style="left:16.0px;top:10.0px;width:24.0px;height:24.0px;border-radius:50%;background:#fc5f58;border:1px solid #df4744;"></div>
<div class="a " style="left:56.0px;top:10.0px;width:24.0px;height:24.0px;border-radius:50%;background:#fdbc2e;border:1px solid #de9f34;"></div>
<div class="a " style="left:96.0px;top:10.0px;width:24.0px;height:24.0px;border-radius:50%;background:#2aca44;border:1px solid #27aa35;"></div>
<div class="a t" style="top:77.2px;font-size:24px;line-height:29px;left:24.8px;letter-spacing:0.55px;">Lieferant:</div>
<div class="a fld dis" style="left:147.0px;top:69.4px;width:425.8px;height:39.2px;"></div>
<div class="a t" style="top:76.7px;font-size:24px;line-height:29px;left:154.0px;letter-spacing:0.83px;">ABC Power AG</div>
<div class="a t" style="top:76.7px;font-size:24px;line-height:29px;left:588.0px;letter-spacing:0.8px;">Abnehmer:</div>
<div class="a fld" style="left:729.0px;top:67.6px;width:398.0px;height:39.2px;"></div>
<div class="a cbb" style="left:1097.5px;top:67.1px;width:36.0px;height:40.2px;"></div>
<svg class="a" style="left:1105.8px;top:80.7px" width="20" height="14" viewBox="0 0 20 14"><path d="M3.5 3.5 L10 10 L16.5 3.5" fill="none" stroke="#fff" stroke-width="3" stroke-linecap="round" stroke-linejoin="round"/></svg>
<div class="a t" style="top:77.2px;font-size:24px;line-height:29px;left:1154.7px;letter-spacing:0.47px;">Einkäufer:</div>
<div class="a fld" style="left:1285.0px;top:67.6px;width:312.0px;height:39.2px;"></div>
<div class="a cbb" style="left:1567.5px;top:67.1px;width:36.0px;height:40.2px;"></div>
<svg class="a" style="left:1575.8px;top:80.7px" width="20" height="14" viewBox="0 0 20 14"><path d="M3.5 3.5 L10 10 L16.5 3.5" fill="none" stroke="#fff" stroke-width="3" stroke-linecap="round" stroke-linejoin="round"/></svg>
<div class="a " style="left:1622.0px;top:65.5px;width:110.0px;height:110.5px;background:#e4e4e4;border:4.5px solid #fff;border-radius:13px;box-shadow:0 0 0 1px #dedede;"></div>
<div class="a t" style="top:132.7px;font-size:24px;line-height:29px;left:24.8px;letter-spacing:0.05px;">Von:</div>
<div class="a fld" style="left:147.0px;top:125.0px;width:176.0px;height:40.0px;"></div>
<div class="a t" style="top:133.1px;font-size:24px;line-height:29px;left:154.4px;letter-spacing:0.62px;">01.01.2014</div>
<div class="a t" style="top:132.7px;font-size:24px;line-height:29px;left:338.7px;letter-spacing:0.66px;">Bis:</div>
<div class="a fld" style="left:396.8px;top:125.0px;width:176.0px;height:40.0px;"></div>
<div class="a t" style="top:133.1px;font-size:24px;line-height:29px;left:404.0px;letter-spacing:0.68px;">31.12.2014</div>
<div class="a t" style="top:132.7px;font-size:24px;line-height:29px;left:588.0px;letter-spacing:0.72px;">Kenn.:</div>
<div class="a fld" style="left:729.0px;top:125.0px;width:204.0px;height:40.0px;"></div>
<div class="a t" style="top:133.1px;font-size:24px;line-height:29px;left:736.6px;letter-spacing:0.65px;">1040978</div>
<div class="a cb " style="left:948.0px;top:132.3px;width:27.3px;height:27.3px;"></div>
<div class="a t" style="top:131.2px;font-size:24px;line-height:29px;left:984.0px;letter-spacing:0.74px;">Importieren</div>
<div class="a t" style="top:132.7px;font-size:24px;line-height:29px;left:1154.7px;letter-spacing:0.61px;">Datum:</div>
<div class="a fld" style="left:1285.0px;top:125.0px;width:181.7px;height:40.0px;"></div>
<div class="a t" style="top:133.1px;font-size:24px;line-height:29px;left:1292.0px;letter-spacing:0.71px;">06.01.2015</div>
<div class="a cb " style="left:1482.3px;top:132.3px;width:27.3px;height:27.3px;"></div>
<div class="a t" style="top:131.2px;font-size:24px;line-height:29px;left:1519.0px;letter-spacing:0.43px;">Erfüllt</div>
<div class="a tbl" style="left:20.0px;top:187.9px;width:1714.0px;height:257.6px;"></div>
<div class="a th" style="left:22.0px;top:189.9px;width:1710.0px;height:31.9px;"></div>
<div class="a " style="left:182.1px;top:194.6px;width:1.5px;height:21.7px;background:#d4d4d4;"></div>
<div class="a " style="left:320.2px;top:194.6px;width:1.5px;height:21.7px;background:#d4d4d4;"></div>
<div class="a " style="left:473.5px;top:194.6px;width:1.5px;height:21.7px;background:#d4d4d4;"></div>
<div class="a " style="left:741.8px;top:194.6px;width:1.5px;height:21.7px;background:#d4d4d4;"></div>
<div class="a " style="left:825.5px;top:194.6px;width:1.5px;height:21.7px;background:#d4d4d4;"></div>
<div class="a " style="left:897.5px;top:194.6px;width:1.5px;height:21.7px;background:#d4d4d4;"></div>
<div class="a " style="left:1053.2px;top:194.6px;width:1.5px;height:21.7px;background:#d4d4d4;"></div>
<div class="a " style="left:1207.2px;top:194.6px;width:1.5px;height:21.7px;background:#d4d4d4;"></div>
<div class="a " style="left:1340.0px;top:194.6px;width:1.5px;height:21.7px;background:#d4d4d4;"></div>
<div class="a " style="left:1528.2px;top:194.6px;width:1.5px;height:21.7px;background:#d4d4d4;"></div>
<div class="a " style="left:1688.2px;top:194.6px;width:1.5px;height:21.7px;background:#d4d4d4;"></div>
<div class="a t" style="top:191.2px;font-size:22px;line-height:26px;left:24.3px;letter-spacing:0.83px;">Menge</div>
<div class="a t" style="top:191.2px;font-size:22px;line-height:26px;left:188.0px;letter-spacing:0.7px;">Verbl. Mg.</div>
<div class="a t" style="top:191.2px;font-size:22px;line-height:26px;left:326.5px;letter-spacing:0.37px;">Einheit</div>
<div class="a t" style="top:191.2px;font-size:22px;line-height:26px;left:480.4px;letter-spacing:0.96px;">Sortiment</div>
<div class="a t" style="top:191.2px;font-size:22px;line-height:26px;left:748.0px;letter-spacing:0.12px;">WEM</div>
<div class="a t" style="top:191.2px;font-size:22px;line-height:26px;left:832.0px;letter-spacing:0.35px;">HAF</div>
<div class="a t" style="top:191.2px;font-size:22px;line-height:26px;left:904.0px;letter-spacing:0.42px;">Preis Eh.</div>
<div class="a t" style="top:191.2px;font-size:22px;line-height:26px;left:1059.9px;letter-spacing:0.68px;">Abr. Einheit</div>
<div class="a t" style="top:191.2px;font-size:22px;line-height:26px;left:1213.8px;letter-spacing:0.61px;">Abf. Fr.</div>
<div class="a t" style="top:191.2px;font-size:22px;line-height:26px;left:1345.8px;letter-spacing:0.66px;">Einkaufsart</div>
<div class="a t" style="top:191.2px;font-size:22px;line-height:26px;left:1534.0px;letter-spacing:1.09px;">MwSt.-Satz</div>
<div class="a t" style="top:191.2px;font-size:22px;line-height:26px;left:1694.0px;letter-spacing:0.5px;">E</div>
<div class="a vs" style="left:1702.0px;top:222.3px;width:30.3px;height:192.2px;"></div>
<div class="a hs" style="left:21.7px;top:414.5px;width:1680.3px;height:29.3px;"></div>
<div class="a " style="left:1702.0px;top:414.5px;width:30.3px;height:29.3px;background:#fff;"></div>
<div class="a sel" style="left:21.7px;top:221.3px;width:1680.3px;height:36.5px;"></div>
<div class="a " style="left:1702.3px;top:190.0px;width:29.7px;height:31.0px;background:#fff;"></div>
<div class="a " style="left:1729.8px;top:194.6px;width:1.5px;height:21.7px;background:#d4d4d4;"></div>
<div class="a t" style="top:225.8px;font-size:26px;line-height:31px;right:1576.8px;letter-spacing:0.46px;">10.000</div>
<div class="a t" style="top:225.8px;font-size:26px;line-height:31px;right:1438.7px;letter-spacing:0.46px;">10.000</div>
<div class="a t" style="top:226.2px;font-size:24px;line-height:29px;left:330.0px;letter-spacing:-1.52px;">Rm</div>
<svg class="a" style="left:443.8px;top:231.3px" width="10" height="22" viewBox="0 0 10 22"><path d="M5 0.2 L9.7 7.8 L0.3 7.8 Z M5 21.8 L9.7 14.2 L0.3 14.2 Z" fill="#1a1a1a"/></svg>
<div class="a t" style="top:226.5px;font-size:24px;line-height:29px;left:485.0px;letter-spacing:0.7px;">Nadel</div>
<svg class="a" style="left:711.6px;top:231.3px" width="10" height="22" viewBox="0 0 10 22"><path d="M5 0.2 L9.7 7.8 L0.3 7.8 Z M5 21.8 L9.7 14.2 L0.3 14.2 Z" fill="#1a1a1a"/></svg>
<div class="a cb " style="left:773.3px;top:227.4px;width:27.3px;height:27.3px;"></div>
<div class="a cb " style="left:851.0px;top:227.4px;width:27.3px;height:27.3px;"></div>
<div class="a t" style="top:225.8px;font-size:26px;line-height:31px;right:705.5px;letter-spacing:0.54px;">12.00</div>
<div class="a t" style="top:226.2px;font-size:24px;line-height:29px;left:1064.0px;letter-spacing:-1.52px;">Rm</div>
<svg class="a" style="left:1177.0px;top:231.3px" width="10" height="22" viewBox="0 0 10 22"><path d="M5 0.2 L9.7 7.8 L0.3 7.8 Z M5 21.8 L9.7 14.2 L0.3 14.2 Z" fill="#1a1a1a"/></svg>
<div class="a t" style="top:226.2px;font-size:24px;line-height:29px;left:1350.0px;letter-spacing:1.12px;">Am Stock</div>
<svg class="a" style="left:1498.0px;top:231.3px" width="10" height="22" viewBox="0 0 10 22"><path d="M5 0.2 L9.7 7.8 L0.3 7.8 Z M5 21.8 L9.7 14.2 L0.3 14.2 Z" fill="#1a1a1a"/></svg>
<div class="a t" style="top:226.2px;font-size:24px;line-height:29px;left:1538.0px;letter-spacing:1.1px;">S-19</div>
<svg class="a" style="left:1658.0px;top:231.3px" width="10" height="22" viewBox="0 0 10 22"><path d="M5 0.2 L9.7 7.8 L0.3 7.8 Z M5 21.8 L9.7 14.2 L0.3 14.2 Z" fill="#1a1a1a"/></svg>
<div class="a " style="left:28.4px;top:422.5px;width:1142.6px;height:15.2px;background:#c1c1c1;border-radius:8px;"></div>
<div class="a btn" style="left:33.5px;top:464.8px;width:191.2px;height:40.2px;"></div>
<div class="a t" style="top:471.0px;font-size:24px;line-height:29px;left:-371.9px;width:1000px;text-align:center;letter-spacing:0.66px;">Dienstleister</div>
<div class="a t" style="top:475.6px;font-size:24px;line-height:29px;left:252.0px;letter-spacing:0.75px;-webkit-text-stroke:0.55px currentColor;">Zweigstelle:</div>
<div class="a fld" style="left:405.3px;top:467.6px;width:395.1px;height:38.8px;"></div>
<div class="a cbb" style="left:770.9px;top:467.1px;width:36.0px;height:39.8px;"></div>
<svg class="a" style="left:779.1px;top:480.5px" width="20" height="14" viewBox="0 0 20 14"><path d="M3.5 3.5 L10 10 L16.5 3.5" fill="none" stroke="#fff" stroke-width="3" stroke-linecap="round" stroke-linejoin="round"/></svg>
<div class="a btn" style="left:1181.4px;top:464.8px;width:163.3px;height:40.3px;"></div>
<div class="a t" style="top:471.0px;font-size:24px;line-height:29px;left:762.0px;width:1000px;text-align:center;letter-spacing:0.58px;">Verteilung</div>
<div class="a btn" style="left:1380.7px;top:464.8px;width:123.9px;height:40.3px;"></div>
<div class="a t" style="top:471.0px;font-size:24px;line-height:29px;left:941.7px;width:1000px;text-align:center;letter-spacing:0.65px;">Kunde</div>
<div class="a btn" style="left:1541.1px;top:464.8px;width:179.8px;height:40.3px;"></div>
<div class="a t" style="top:471.0px;font-size:24px;line-height:29px;left:1130.0px;width:1000px;text-align:center;letter-spacing:0.67px;">Hinzufügen</div>
<div class="a tbl" style="left:20.7px;top:530.5px;width:1712.6px;height:110.2px;"></div>
<div class="a vs" style="left:1702.5px;top:531.5px;width:29.8px;height:79.0px;"></div>
<div class="a hs" style="left:21.7px;top:610.5px;width:1680.8px;height:29.2px;"></div>
<div class="a " style="left:14.6px;top:646.6px;width:1725.0px;height:211.2px;background:#8ebdf1;border-radius:7px;box-shadow:0 0 0 1px rgba(142,189,241,0.5);"></div>
<div class="a tbl" style="left:19.9px;top:651.8px;width:1714.3px;height:200.7px;"></div>
<div class="a th" style="left:21.9px;top:653.8px;width:1710.3px;height:31.9px;"></div>
<div class="a " style="left:443.2px;top:658.5px;width:1.5px;height:21.7px;background:#d4d4d4;"></div>
<div class="a " style="left:775.5px;top:658.5px;width:1.5px;height:21.7px;background:#d4d4d4;"></div>
<div class="a " style="left:865.9px;top:658.5px;width:1.5px;height:21.7px;background:#d4d4d4;"></div>
<div class="a " style="left:1036.0px;top:658.5px;width:1.5px;height:21.7px;background:#d4d4d4;"></div>
<div class="a " style="left:1190.2px;top:658.5px;width:1.5px;height:21.7px;background:#d4d4d4;"></div>
<div class="a " style="left:1699.7px;top:658.5px;width:1.5px;height:21.7px;background:#d4d4d4;"></div>
<div class="a " style="left:1730.2px;top:658.5px;width:1.5px;height:21.7px;background:#d4d4d4;"></div>
<div class="a t" style="top:655.1px;font-size:22px;line-height:26px;left:26.4px;letter-spacing:0.66px;">Dienstleister</div>
<div class="a t" style="top:655.1px;font-size:22px;line-height:26px;left:450.3px;letter-spacing:0.7px;">Dienstleistung</div>
<div class="a t" style="top:655.1px;font-size:22px;line-height:26px;left:782.0px;letter-spacing:0.66px;">Erfüllt</div>
<div class="a t" style="top:655.1px;font-size:22px;line-height:26px;left:872.0px;letter-spacing:0.71px;">Festmenge</div>
<div class="a t" style="top:655.1px;font-size:22px;line-height:26px;left:1042.5px;letter-spacing:0.24px;">Preis Eh.</div>
<div class="a t" style="top:655.1px;font-size:22px;line-height:26px;left:1196.3px;letter-spacing:0.46px;">Einheit</div>
<div class="a vs" style="left:1702.5px;top:686.2px;width:30.0px;height:134.3px;"></div>
<div class="a hs" style="left:21.6px;top:820.5px;width:1680.9px;height:30.3px;"></div>
<div class="a " style="left:1702.5px;top:820.5px;width:30.0px;height:30.3px;background:#fff;"></div>
<div class="a " style="left:21.6px;top:686.0px;width:1680.9px;height:35.6px;background:#0068da;"></div>
<div class="a t" style="top:691.8px;font-size:26px;line-height:31px;left:28.4px;color:#fff;letter-spacing:0.67px;">Alexander Hilser GmbH</div>
<div class="a t" style="top:691.8px;font-size:26px;line-height:31px;left:451.8px;color:#fff;letter-spacing:0.7px;">Aufarbeiten</div>
<div class="a cb " style="left:808.3px;top:691.4px;width:27.7px;height:27.3px;"></div>
<div class="a t" style="top:691.8px;font-size:26px;line-height:31px;right:570.9px;color:#fff;letter-spacing:0.54px;">12.00</div>
<div class="a t" style="top:691.8px;font-size:26px;line-height:31px;left:1198.6px;color:#fff;letter-spacing:0.6px;">Rm</div>
</div></div>
</body></html>
